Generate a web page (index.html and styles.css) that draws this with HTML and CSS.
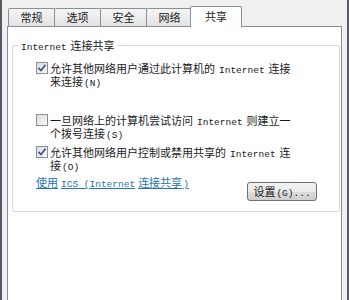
FILE: index.html
```html
<!DOCTYPE html>
<html lang="zh-CN">
<head>
  <meta charset="UTF-8">
  <title>共享</title>
  <link rel="stylesheet" href="styles.css">
</head>
<body>
  <div class="window">
    <div class="tabs">
      <div class="tab">常规</div>
      <div class="tab">选项</div>
      <div class="tab">安全</div>
      <div class="tab">网络</div>
      <div class="tab active">共享</div>
    </div>

    <div class="panel">
      <fieldset class="group">
        <legend><span class="en first">Internet</span>连接共享</legend>

        <div class="option">
          <span class="check checked">
            <svg width="10" height="10" viewBox="0 0 10 10"><path d="M1.5 4.8 L4 7.5 L8.5 1.8" fill="none" stroke="#3a4f8c" stroke-width="1.7"/></svg>
          </span>
          <span class="label">允许其他网络用户通过此计算机的<span class="en">Internet</span>连接来连接<span class="en key">(N)</span></span>
        </div>

        <div class="option">
          <span class="check"></span>
          <span class="label">一旦网络上的计算机尝试访问<span class="en">Internet</span>则建立一个拨号连接<span class="en key">(S)</span></span>
        </div>

        <div class="option">
          <span class="check checked">
            <svg width="10" height="10" viewBox="0 0 10 10"><path d="M1.5 4.8 L4 7.5 L8.5 1.8" fill="none" stroke="#3a4f8c" stroke-width="1.7"/></svg>
          </span>
          <span class="label">允许其他网络用户控制或禁用共享的<span class="en">Internet</span>连接<span class="en key">(O)</span></span>
        </div>

        <div class="footer">
          <a class="link" href="#">使用<span class="en">ICS (Internet</span>连接共享<span class="en key">)</span></a>
          <button class="btn">设置<span class="en key">(G)...</span></button>
        </div>
      </fieldset>
    </div>
  </div>
</body>
</html>
```

FILE: styles.css
```css
* {
  margin: 0;
  padding: 0;
  box-sizing: border-box;
}
body {
  font-family: "Noto Sans CJK SC", sans-serif;
  font-size: 11px;
  line-height: 13px;
  color: #1a1a1a;
  background: #f0f0f0;
  width: 349px;
  height: 300px;
  overflow: hidden;
}
.en {
  font-family: "Liberation Mono", "DejaVu Sans Mono", monospace;
  font-size: 9.5px;
  line-height: 9px;
  margin: 0 4px;
}
.en.first {
  margin-left: 0;
}
.en.key {
  margin: 0 0 0 1px;
}
.window {
  height: 300px;
  border-left: 2px solid #535a64;
  border-right: 2px solid #535a64;
  padding: 6px 5px 0 5px;
  display: flex;
  flex-direction: column;
}

/* tab strip */
.tabs {
  display: flex;
  align-items: flex-end;
  padding-left: 1px;
  height: 20px;
}
.tab {
  width: 47px;
  height: 18px;
  margin-right: -1px;
  border: 1px solid #8b8e96;
  border-bottom: none;
  border-radius: 2px 2px 0 0;
  background: linear-gradient(#f5f5f5, #e3e3e3);
  text-align: center;
  line-height: 16px;
}
.tab.active {
  width: 52px;
  height: 21px;
  margin: 0 -2px -1px -2px;
  background: #fff;
  position: relative;
  z-index: 1;
  line-height: 18px;
}

/* page body */
.panel {
  flex: 1;
  background: #fff;
  border: 1px solid #8b8e96;
  border-bottom: none;
  padding: 12px 1px 0 4px;
}
.group {
  border: 1px solid #d5dbe0;
  border-radius: 2px;
  padding: 10px 22px 10px 22px;
}
.group legend {
  margin-left: -16px;
  padding: 0 2px;
}

.option {
  display: flex;
  align-items: flex-start;
  margin-bottom: 6px;
}
.option:first-of-type {
  margin-bottom: 26px;
}
.check {
  flex: none;
  width: 12px;
  height: 12px;
  margin: 0 2px 0 1px;
  border: 1px solid #8e8f8f;
  background: linear-gradient(135deg, #dcdcdc, #fbfbfb);
  display: flex;
  align-items: center;
  justify-content: center;
}
.check.checked {
  background: linear-gradient(135deg, #d6dbe6, #fbfbfb);
}
.label {
  width: 245px;
}

.footer {
  display: flex;
  justify-content: space-between;
  align-items: flex-start;
  margin-top: -2px;
}
.link {
  color: #2a74b0;
  text-decoration: underline;
  margin-left: 1px;
}
.link .en {
  margin: 0 3px;
}
.link .en.key {
  margin: 0 0 0 1px;
}
.btn {
  width: 70px;
  height: 19px;
  margin-top: 6px;
  font: inherit;
  line-height: 13px;
  color: #1a1a1a;
  border: 1px solid #707070;
  border-radius: 3px;
  background: linear-gradient(#f2f2f2 0%, #ebebeb 50%, #dddddd 51%, #cfcfcf 100%);
}
```
